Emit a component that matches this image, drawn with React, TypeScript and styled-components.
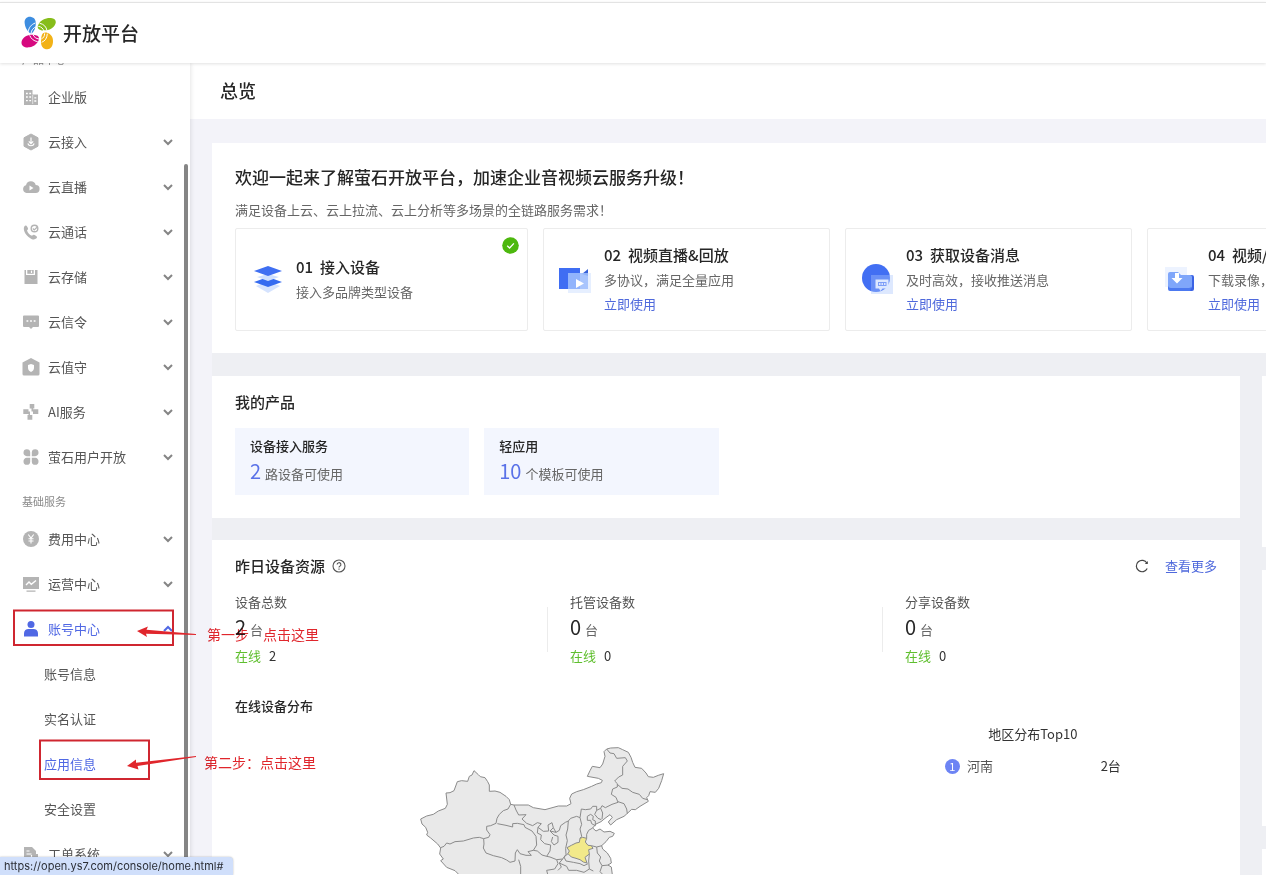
import React from "react";
import styled, { createGlobalStyle } from "styled-components";

const GlobalStyle = createGlobalStyle`
  *, *::before, *::after { box-sizing: border-box; }
  body {
    margin: 0;
    background: #fff;
    color: #555;
    font-family: "Noto Sans CJK SC", "Noto Sans", sans-serif;
    font-size: 13px;
    line-height: 20px;
  }
  button { border: 0; background: none; padding: 0; font: inherit; color: inherit; cursor: pointer; }
  a { color: #4f69dc; text-decoration: none; }
  h1, h2, h3, p, ul, ol, dl, dd { margin: 0; padding: 0; font-weight: inherit; font-size: inherit; }
  ul, ol { list-style: none; }
  svg { display: block; flex: none; }
`;

/* ---------- shell ---------- */

const Page = styled.div`
  position: relative;
  display: flex;
  flex-direction: column;
  height: 100vh;
  overflow: hidden;
  padding-top: 2px;
`;

const Header = styled.header`
  position: relative;
  z-index: 2;
  flex: none;
  display: flex;
  align-items: center;
  gap: 7px;
  height: 61px;
  padding-left: 21px;
  background: #fff;
  border-top: 1px solid #e3e3e3;
  box-shadow: 0 1px 3px rgba(0, 0, 0, 0.12);
`;

const Brand = styled.span`
  font-size: 19px;
  line-height: 28px;
  font-weight: 500;
  color: #262626;
`;

const Body = styled.div`
  flex: 1;
  min-height: 0;
  display: flex;
`;

/* ---------- sidebar ---------- */

const Sidebar = styled.nav`
  position: relative;
  z-index: 1;
  flex: 0 0 190px;
  overflow: hidden;
  background: #fff;
  box-shadow: 1px 0 4px rgba(0, 0, 0, 0.1);
`;

const NavScroll = styled.div`
  margin-top: -26px;
`;

const ScrollThumb = styled.div`
  position: absolute;
  top: 101px;
  right: 2px;
  bottom: 0;
  width: 4px;
  border-radius: 2px 2px 0 0;
  background: #858585;
`;

const NavLabel = styled.h2`
  height: 37px;
  padding: 12px 22px 0;
  font-size: 11px;
  line-height: 20px;
  color: #8a8a8a;
`;

const NavRow = styled.button<{ $active?: boolean }>`
  display: flex;
  align-items: center;
  gap: 8px;
  width: 100%;
  height: 45px;
  padding: 0 16px 0 22px;
  text-align: left;
  color: ${(p) => (p.$active ? "#5068e4" : "#555")};
`;

const NavText = styled.span`
  flex: 1;
`;

const SubRow = styled.a<{ $active?: boolean }>`
  display: flex;
  align-items: center;
  height: 45px;
  padding-left: 44px;
  color: ${(p) => (p.$active ? "#5068e4" : "#555")};
`;

/* ---------- main ---------- */

const Main = styled.main`
  flex: 1;
  min-width: 0;
  overflow: hidden;
  background: #f3f3f9;
`;

const TitleBar = styled.div`
  padding: 13px 30px 15px;
  background: #fff;
`;

const PageTitle = styled.h1`
  font-size: 18px;
  line-height: 28px;
  font-weight: 500;
  color: #262626;
`;

const Content = styled.div`
  display: flex;
  flex-direction: column;
  gap: 23px;
  margin: 24px 0 0 22px;
  background: #eeeff3;
`;

const Welcome = styled.section`
  padding: 21px 0 22px 23px;
  overflow: hidden;
  background: #fff;
`;

const WelcomeTitle = styled.h2`
  font-size: 17px;
  line-height: 26px;
  font-weight: 500;
  color: #262626;
  white-space: nowrap;
`;

const WelcomeText = styled.p`
  margin: 10px 0 8px;
  color: #666;
`;

const Steps = styled.ol`
  display: flex;
  gap: 15px;
`;

const Step = styled.li<{ $wide?: boolean }>`
  position: relative;
  flex: 0 0 ${(p) => (p.$wide ? 293 : 287)}px;
  display: flex;
  align-items: center;
  gap: 13px;
  height: 103px;
  padding: 0 15px 2px;
  border: 1px solid #ececec;
  border-radius: 2px;
  white-space: nowrap;
`;

const StepTitle = styled.h3`
  display: flex;
  gap: 7px;
  font-size: 15px;
  line-height: 26px;
  font-weight: 500;
  color: #262626;
`;

const StepLine = styled.p`
  line-height: 24px;
  color: #666;
`;

const DoneBadge = styled.span`
  position: absolute;
  top: 8px;
  right: 8px;
`;

const Columns = styled.div`
  display: flex;
  gap: 22px;
`;

const LeftColumn = styled.div`
  flex: 0 0 calc(100% - 26px);
  display: flex;
  flex-direction: column;
  gap: 22px;
`;

const RightColumn = styled.aside`
  flex: 0 0 300px;
  display: flex;
  flex-direction: column;
  gap: 23px;
`;

const SidePanel = styled.div<{ $height: number }>`
  height: ${(p) => p.$height}px;
  background: #fff;
`;

const Card = styled.section`
  padding: 14px 23px 23px;
  background: #fff;
`;

const CardHead = styled.div`
  display: flex;
  align-items: center;
  gap: 7px;
`;

const CardTitle = styled.h2`
  font-size: 15px;
  line-height: 24px;
  font-weight: 500;
  color: #262626;
`;

const CardTools = styled.div`
  display: flex;
  align-items: center;
  gap: 16px;
  margin-left: auto;
`;

const Products = styled.div`
  display: grid;
  grid-template-columns: repeat(4, 1fr);
  gap: 15px;
  margin-top: 14px;
`;

const Product = styled.div`
  padding: 8px 15px 7px;
  background: #f3f6fe;
`;

const ProductName = styled.h3`
  font-weight: 500;
  color: #262626;
`;

const Amount = styled.p`
  display: flex;
  align-items: baseline;
  gap: 4px;
  height: 28px;
  margin-top: 4px;
  line-height: 28px;
  color: #666;
`;

const Figure = styled.span<{ $accent?: boolean }>`
  font-size: 20px;
  line-height: 20px;
  color: ${(p) => (p.$accent ? "#5a72e8" : "#262626")};
`;

const Stats = styled.div`
  display: grid;
  grid-template-columns: repeat(3, 1fr);
  margin: 14px -23px 0 0;
`;

const Stat = styled.div`
  display: flex;
  justify-content: space-between;
  align-items: center;

  &:not(:last-child)::after {
    content: "";
    width: 1px;
    height: 45px;
    margin-right: 22px;
    background: #ececec;
  }
`;

const Online = styled.p`
  display: flex;
  gap: 8px;
  margin-top: 2px;
  color: #333;
`;

const OnlineTag = styled.span`
  color: #5fbf2e;
`;

const SubTitle = styled.h3`
  margin-top: 30px;
  font-weight: 500;
  color: #262626;
`;

const Distribution = styled.div`
  display: grid;
  grid-template-columns: 5fr 3fr;
  justify-items: center;
`;

const MapPane = styled.div`
  padding-top: 13px;
`;

const Ranking = styled.div`
  width: 176px;
  padding-top: 8px;
`;

const RankTitle = styled.h3`
  text-align: center;
  color: #333;
`;

const RankRow = styled.li`
  display: flex;
  align-items: center;
  gap: 7px;
  margin-top: 12px;
  color: #333;
`;

const RankBadge = styled.span`
  width: 15px;
  height: 15px;
  border-radius: 50%;
  background: #6d84f4;
  color: #fff;
  font-size: 11px;
  line-height: 15px;
  text-align: center;
`;

const RankName = styled.span`
  flex: 1;
  color: #555;
`;

/* ---------- overlays ---------- */

const StatusBar = styled.div`
  position: fixed;
  left: 0;
  bottom: 0;
  z-index: 4;
  padding: 0 10px 0 4px;
  border-radius: 0 4px 0 0;
  background: #d0dffb;
  box-shadow: 0 0 2px rgba(0, 0, 0, 0.3);
  color: #2c2f36;
  font-family: Inter, sans-serif;
  font-size: 11px;
  line-height: 18px;
`;

const Marks = styled.svg`
  position: absolute;
  top: 0;
  left: 0;
  z-index: 3;
  pointer-events: none;
`;

const Note = styled.span<{ $left: number; $top: number }>`
  position: absolute;
  left: ${(p) => p.$left}px;
  top: ${(p) => p.$top}px;
  z-index: 3;
  font-size: 14px;
  line-height: 20px;
  color: #e0262c;
  mix-blend-mode: multiply;
  white-space: pre;
  pointer-events: none;
`;

/* ---------- drawings ---------- */

const Logo = () => (
  <svg width="35" height="34" viewBox="0 0 105 102" aria-hidden="true">
    <path d="M11 22C9 8 20 0 31 3c11 2 15 13 13 25-1 10-4 17-10 23-3 2-8 1-11-3C16 41 12 32 11 22z" fill="#3d8de0" />
    <path d="M52 26C58 12 74 5 90 6c12 1 17 9 13 18-5 12-18 19-32 19-8 1-15-1-19-5-3-4-2-8 0-12z" fill="#86bd1a" />
    <path d="M2 76c3-13 18-21 34-20 13 1 19 5 18 12-2 12-14 24-29 26C10 96-1 89 2 76z" fill="#d6097f" />
    <path d="M66 52c4-3 9-3 14-1 12 4 17 15 16 27-1 13-7 21-17 22-12 0-19-9-19-22 0-10 1-21 6-26z" fill="#f2b217" />
    <g fill="none" stroke="#fff" strokeWidth="3">
      <path d="M22 47c1-12 9-22 21-26M30 52c1-9 7-17 16-20" />
      <path d="M56 22c12 2 20 10 22 22M52 31c9 1 15 7 17 15" />
      <path d="M26 58c4 10 12 17 24 19M36 56c3 7 9 12 18 13" />
      <path d="M62 79c10-4 16-12 17-26M61 69c6-3 10-8 10-17" />
    </g>
  </svg>
);

const Chevron = ({ up }: { up?: boolean }) => (
  <svg width="12" height="12" viewBox="0 0 12 12" fill="none" stroke={up ? "#5068e4" : "#858585"} strokeWidth="2" aria-hidden="true">
    <path d={up ? "M2 8l4-4 4 4" : "M2 4l4 4 4-4"} />
  </svg>
);

const icons: Record<string, React.ReactNode> = {
  building: (
    <>
      <path d="M2 2h8.500v4.500H16V17H2z" />
      <path d="M4 5.500h1.800M7.300 5.500h1.800M4 9h1.800M7.300 9h1.800M4 12.700h1.800M7.300 12.700h1.800M12.300 9.800h2M12.300 13h2" stroke="#fff" strokeWidth="1.300" />
      <path d="M10.700 7v9" stroke="#fff" strokeWidth=".6" />
    </>
  ),
  access: (
    <>
      <path d="M9 1l7 3.800v8.400L9 17l-7-3.800V4.800z" strokeLinejoin="round" stroke="#b4b4b4" />
      <path d="M9 4.500v6M6.800 8.400L9 10.600l2.200-2.200M5.800 10.500a3.400 3.400 0 0 0 6.400 0" fill="none" stroke="#fff" strokeWidth="1.200" />
    </>
  ),
  live: (
    <>
      <path d="M4.500 15A4 4 0 0 1 4 7.200 5 5 0 0 1 13.700 7 4 4 0 0 1 13.500 15z" />
      <path d="M7.500 7.500v5l4-2.500z" fill="#fff" />
    </>
  ),
  call: (
    <>
      <path d="M2.300 3.500C3.500 2 4.500 2.400 5.500 4.200c.9 1.500.6 2.100-.5 3.300.8 2.400 2.600 4.300 5 5.300 1.200-1 2-1.300 3.400-.4 1.800 1 2.200 2 .8 3.200-1.700 1.500-4.500 1-7.700-1.700C3 11 .8 6.500 2.300 3.500z" />
      <circle cx="12.500" cy="5.500" r="3.300" fill="none" stroke="#b4b4b4" strokeWidth="1.400" />
      <path d="M10.800 5.500l1.400 1.400 3.400-3.200" fill="none" stroke="#b4b4b4" strokeWidth="1.300" />
    </>
  ),
  disk: (
    <>
      <path d="M2.500 2h1.500v5h9V2h2.500v14h-13z" />
      <path d="M5.300 2h6.400v3.800H5.300z" />
      <path d="M9.500 2.600v2.400" stroke="#fff" strokeWidth="1.200" />
    </>
  ),
  message: (
    <>
      <path d="M2 2.500h14a1 1 0 0 1 1 1v9.500a1 1 0 0 1-1 1h-5L9 16l-2-2H2a1 1 0 0 1-1-1V3.500a1 1 0 0 1 1-1z" />
      <path d="M4.500 8h1.800M8.100 8h1.800M11.700 8h1.800" stroke="#fff" strokeWidth="1.600" />
    </>
  ),
  guard: (
    <>
      <path d="M9 0l8.500 4.500V16a1.500 1.500 0 0 1-1.500 1.500H2A1.500 1.500 0 0 1 .5 16V4.500z" />
      <path d="M9 6l3 1v3c0 2-1.300 3.200-3 4-1.700-.8-3-2-3-4V7z" fill="#fff" />
    </>
  ),
  ai: <path d="M7.700 1h4.600v4.600H7.700zM1.300 6.300h5.200v4.600H1.300zM11 6.300h5.300v4.600H11zM5.500 12h4.800v4.800H5.500zM6.500 8.500h1.500v3.500H6.500zM9.500 5.600h1.500v3H9.500z" />,
  clover: (
    <path d="M1.500 4.500a3.300 3.300 0 1 1 6.700 0v3.700H4.800A3.300 3.300 0 0 1 1.500 4.500zM16.500 4.500a3.300 3.300 0 1 0-6.700 0v3.700h3.400a3.300 3.300 0 0 0 3.300-3.700zM1.500 13.500a3.300 3.300 0 1 0 6.700 0V9.800H4.800a3.300 3.300 0 0 0-3.300 3.700zM16.500 13.500a3.300 3.300 0 1 1-6.700 0V9.800h3.400a3.300 3.300 0 0 1 3.300 3.700z" />
  ),
  fee: (
    <>
      <circle cx="9" cy="9" r="8" />
      <path d="M6.300 4.500L9 8l2.700-3.500M9 8v5.500M6.500 8.700h5M6.500 11h5" fill="none" stroke="#fff" strokeWidth="1.100" />
    </>
  ),
  operate: (
    <>
      <path d="M1 2h16v12H1zM4.500 15.500h9v1.300h-9z" />
      <path d="M4 10l3-3 2.300 2.300L14 5.500" fill="none" stroke="#fff" strokeWidth="1.400" />
    </>
  ),
  user: (
    <>
      <circle cx="9" cy="4.500" r="3.500" />
      <path d="M2 16.500v-3.200C2 10.500 4.200 9 6.500 9h5c2.300 0 4.500 1.500 4.500 4.300v3.200z" />
    </>
  ),
  order: (
    <>
      <path d="M2 2h8l4 4v3h2v8H2z" />
      <path d="M4.500 6h3M4.500 9h5M9.500 10v6M11.500 12.500h3" stroke="#fff" strokeWidth="1.200" />
    </>
  ),
};

const NavIcon = ({ name, active }: { name: string; active?: boolean }) => (
  <svg width="18" height="18" viewBox="0 0 18 18" fill={active ? "#5068e4" : "#b4b4b4"} aria-hidden="true">
    {icons[name]}
  </svg>
);

const LayersIcon = () => (
  <svg width="32" height="32" viewBox="0 0 32 32" aria-hidden="true">
    <path d="M5 23l12-5 12 5-12 7z" fill="#c3d7fd" opacity=".7" />
    <path d="M3 19l14-5 14 5-14 5z" fill="#356bf0" />
    <path d="M6 14l11-3 11 3-11 4z" fill="#cfe0fe" />
    <path d="M3 8l14-5 14 5-14 5z" fill="#3f6ff2" />
  </svg>
);

const VideoIcon = () => (
  <svg width="32" height="32" viewBox="0 0 32 32" aria-hidden="true">
    <path d="M0 5h21v21H0z" fill="#3f6df3" />
    <path d="M23 11l6-5v7z" fill="#3560d8" />
    <path d="M9 10h23v20H9z" fill="#d5e4ff" opacity=".6" />
    <path d="M9 10h20v16H9z" fill="#8fb4fc" opacity=".7" />
    <path d="M17 16v9l8-4.500z" fill="#fff" />
  </svg>
);

const MessageIcon = () => (
  <svg width="32" height="32" viewBox="0 0 32 32" aria-hidden="true">
    <circle cx="15" cy="15" r="14" fill="#426ff3" />
    <path d="M10 12h22v19H10z" fill="#a9c6fd" opacity=".4" />
    <path d="M14.500 16.500h13v9h-6l-2 2.500-1.500-2.500h-3.500z" fill="#dce8ff" />
    <path d="M17 19h8.500v4H17z" fill="#7d9ff8" />
    <path d="M18 21h1.500M20.500 21h1.500M23 21h1.500" stroke="#fff" strokeWidth="1.300" />
  </svg>
);

const DownloadIcon = () => (
  <svg width="32" height="32" viewBox="0 0 32 32" aria-hidden="true">
    <path d="M2 4h22v20H2z" fill="#edf3ff" />
    <path d="M8 12h21a2 2 0 0 1 2 2v12a2 2 0 0 1-2 2H8z" fill="#3b63e4" />
    <path d="M7 9h8l3 3h9a2 2 0 0 1 2 2v9a3 3 0 0 1-3 3H7a2 2 0 0 1-2-2V11a2 2 0 0 1 2-2z" fill="#7fa6fa" />
    <path d="M5 23v3a2 2 0 0 0 2 2h20l2-4-3 1H8a3 3 0 0 1-3-2z" fill="#4c79f0" />
    <path d="M12 10h4v5h3.500L14 20.500 8.500 15H12z" fill="#fff" />
  </svg>
);

const DoneIcon = () => (
  <svg width="17" height="17" viewBox="0 0 17 17" aria-label="已完成" role="img">
    <circle cx="8.500" cy="8.500" r="8.300" fill="#4db80e" />
    <path d="M5.200 8.700l2.400 2.300 4.300-4.600" fill="none" stroke="#fff" strokeWidth="1.300" />
  </svg>
);

const HelpIcon = () => (
  <svg width="14" height="14" viewBox="0 0 14 14" fill="none" stroke="#555" strokeWidth="1.100" aria-hidden="true">
    <circle cx="7" cy="7" r="6" />
    <path d="M5.100 5.600a1.900 1.900 0 1 1 2.700 1.700c-.6.3-.8.6-.8 1.200M7 9.500v1.200" />
  </svg>
);

const RefreshIcon = () => (
  <svg width="14" height="14" viewBox="0 0 14 14" fill="none" stroke="#444" strokeWidth="1.200" aria-hidden="true">
    <path d="M12.200 9.500A5.700 5.700 0 1 1 12 4.200" />
    <path d="M12.800 2v3h-3z" fill="#444" stroke="none" />
  </svg>
);

const ChinaMap = () => (
  <svg width="284" height="145" viewBox="0 0 852 435" role="img" aria-label="在线设备分布地图">
    <g stroke="#8b8b8b" strokeWidth="3" strokeLinejoin="round" fill="#e9e9e9">
      <path d="M62 270L80 261 100 256 115 246 136 238 142 226 138 192 150 191 162 185 172 158 185 155 203 157 208 142 216 138 222 125 235 137 241 143 255 146 263 158 268 168 268 187 285 186 300 190 318 202 328 212 332 226 342 228 385 228 400 236 435 242 475 231 500 231 513 224 509 208 515 195 530 188 550 182 575 172 590 165 604 161 607 154 595 148 562 142 570 125 577 112 600 116 608 105 615 82 612 68 620 60 632 57 655 56 668 62 685 70 693 85 698 100 705 115 725 118 738 132 745 143 760 145 775 139 791 134 785 155 776 178 766 190 750 188 746 200 740 206 745 217 720 232 706 242 695 241 680 255 672 262 650 272 632 288 625 279 637 265 630 257 615 268 603 278 588 285 578 297 588 306 600 300 612 309 630 307 643 313 638 322 628 325 618 338 605 350 608 360 622 372 632 388 634 402 624 408 634 414 638 445 185 445 165 425 140 415 122 395 130 390 119 375 122 357 113 345 92 327 80 318 83 310 77 295 66 285z" />
      <path d="M501 356L514 349 528 342 538 340 540 328 548 325 560 328 556 339 564 349 574 350 579 358 566 362 568 375 555 385 561 402 550 399 540 392 528 388 514 384 504 374 508 366z" fill="#f2e98a" />
      <g fill="none">
        <path d="M122 356L132 352 140 342 150 345 165 338 190 336 220 327 238 325 251 329 266 325 270 317 260 303 260 292 272 290 288 283 291 268 298 256 310 245 324 240 332 226" />
        <path d="M251 329L252 345 250 357 258 372 280 380 305 386 320 393 330 400 345 396 346 372 352 362 360 374 378 379 394 379 384 368 400 364 410 348 408 322 396 306 375 295 372 287 352 283 338 284 338 294 318 289 292 284" />
        <path d="M342 228L348 243 356 258 378 257 366 270 380 283 398 290 412 281 424 284 414 295 430 307 446 306 444 288 456 281 460 296 450 306 468 310 478 304" />
        <path d="M478 304L482 290 496 280 505 276 512 268 530 262 540 266 544 240 556 242 572 240 578 232 590 232 590 244 602 238 606 230 616 236 636 226 654 220 648 205 634 196 638 180 652 174 652 164 644 156 656 144 668 138 668 112 682 96 676 86 650 88 642 74 630 72 620 60" />
        <path d="M652 166L666 178 684 180 698 190 718 196 728 208 742 212M654 218L672 224 680 240 682 254M602 238L608 252 606 270" />
        <path d="M505 276L503 300 498 318 502 335 497 358M540 266L545 286 540 300 545 322 540 328" />
        <path d="M562 262L572 256 580 262 578 272 586 276 586 290 575 284 572 274 562 274zM590 244L584 256 594 268 604 272M578 297L566 304 560 316 560 328M574 350L590 354 606 350M590 354L592 372 602 384 598 396 606 410 626 408M568 375L566 396 568 420 580 426M606 410L600 428 608 436" />
        <path d="M414 295L412 312 424 318 422 332 434 344 452 348 450 366 440 382 426 378 412 366 400 364M450 306L462 318 474 322 474 340 462 348 454 338 458 324M460 296L468 310" />
        <path d="M497 358L498 376 488 390 470 392 450 384 440 382M356 392L362 412 362 440M470 392L474 404 464 420 440 424 444 440M488 390L478 402 484 414 474 424M504 374L492 384 498 396 520 400 540 404 552 410 564 404M478 402L500 412 506 424 530 424 552 430 568 420" />
      </g>
    </g>
  </svg>
);

/* ---------- data ---------- */

const products = [
  { icon: "building", text: "企业版", leaf: true },
  { icon: "access", text: "云接入" },
  { icon: "live", text: "云直播" },
  { icon: "call", text: "云通话" },
  { icon: "disk", text: "云存储" },
  { icon: "message", text: "云信令" },
  { icon: "guard", text: "云值守" },
  { icon: "ai", text: "AI服务" },
  { icon: "clover", text: "萤石用户开放" },
];

const accountLinks = ["账号信息", "实名认证", "应用信息", "安全设置"];

const steps = [
  { no: "01", title: "接入设备", text: "接入多品牌类型设备", icon: <LayersIcon />, done: true },
  { no: "02", title: "视频直播&回放", text: "多协议，满足全量应用", icon: <VideoIcon /> },
  { no: "03", title: "获取设备消息", text: "及时高效，接收推送消息", icon: <MessageIcon /> },
  { no: "04", title: "视频/图片下载", text: "下载录像，保存至本地", icon: <DownloadIcon /> },
];

const stats = [
  { label: "设备总数", total: 2, online: 2 },
  { label: "托管设备数", total: 0, online: 0 },
  { label: "分享设备数", total: 0, online: 0 },
];

const NavItem = ({ icon, text, leaf, active }: { icon: string; text: string; leaf?: boolean; active?: boolean }) => (
  <NavRow type="button" $active={active} aria-expanded={leaf ? undefined : !!active}>
    <NavIcon name={icon} active={active} />
    <NavText>{text}</NavText>
    {!leaf && <Chevron up={active} />}
  </NavRow>
);

export default function App() {
  return (
    <>
      <GlobalStyle />
      <Page>
        <Header>
          <Logo />
          <Brand>开放平台</Brand>
        </Header>
        <Body>
          <Sidebar>
            <NavScroll>
              <NavLabel>产品中心</NavLabel>
              {products.map((item) => (
                <NavItem key={item.text} {...item} />
              ))}
              <NavLabel>基础服务</NavLabel>
              <NavItem icon="fee" text="费用中心" />
              <NavItem icon="operate" text="运营中心" />
              <NavItem icon="user" text="账号中心" active />
              {accountLinks.map((text) => (
                <SubRow key={text} href="#" $active={text === "应用信息"}>
                  {text}
                </SubRow>
              ))}
              <NavItem icon="order" text="工单系统" />
            </NavScroll>
            <ScrollThumb />
          </Sidebar>
          <Main>
            <TitleBar>
              <PageTitle>总览</PageTitle>
            </TitleBar>
            <Content>
              <Welcome>
                <WelcomeTitle>欢迎一起来了解萤石开放平台，加速企业音视频云服务升级！</WelcomeTitle>
                <WelcomeText>满足设备上云、云上拉流、云上分析等多场景的全链路服务需求！</WelcomeText>
                <Steps>
                  {steps.map((s) => (
                    <Step key={s.no} $wide={s.done}>
                      {s.icon}
                      <div>
                        <StepTitle>
                          <span>{s.no}</span>
                          <span>{s.title}</span>
                        </StepTitle>
                        <StepLine>{s.text}</StepLine>
                        {!s.done && (
                          <StepLine>
                            <a href="#">立即使用</a>
                          </StepLine>
                        )}
                      </div>
                      {s.done && (
                        <DoneBadge>
                          <DoneIcon />
                        </DoneBadge>
                      )}
                    </Step>
                  ))}
                </Steps>
              </Welcome>
              <Columns>
                <LeftColumn>
                  <Card>
                    <CardTitle>我的产品</CardTitle>
                    <Products>
                      <Product>
                        <ProductName>设备接入服务</ProductName>
                        <Amount>
                          <Figure $accent>2</Figure>路设备可使用
                        </Amount>
                      </Product>
                      <Product>
                        <ProductName>轻应用</ProductName>
                        <Amount>
                          <Figure $accent>10</Figure>个模板可使用
                        </Amount>
                      </Product>
                    </Products>
                  </Card>
                  <Card>
                    <CardHead>
                      <CardTitle>昨日设备资源</CardTitle>
                      <button type="button" aria-label="说明">
                        <HelpIcon />
                      </button>
                      <CardTools>
                        <button type="button" aria-label="刷新">
                          <RefreshIcon />
                        </button>
                        <a href="#">查看更多</a>
                      </CardTools>
                    </CardHead>
                    <Stats>
                      {stats.map((s) => (
                        <Stat key={s.label}>
                          <div>
                            <p>{s.label}</p>
                            <Amount>
                              <Figure>{s.total}</Figure>台
                            </Amount>
                            <Online>
                              <OnlineTag>在线</OnlineTag>
                              {s.online}
                            </Online>
                          </div>
                        </Stat>
                      ))}
                    </Stats>
                    <SubTitle>在线设备分布</SubTitle>
                    <Distribution>
                      <MapPane>
                        <ChinaMap />
                      </MapPane>
                      <Ranking>
                        <RankTitle>地区分布Top10</RankTitle>
                        <ol>
                          <RankRow>
                            <RankBadge>1</RankBadge>
                            <RankName>河南</RankName>
                            <span>2台</span>
                          </RankRow>
                        </ol>
                      </Ranking>
                    </Distribution>
                  </Card>
                </LeftColumn>
                <RightColumn>
                  <SidePanel $height={171} />
                  <SidePanel $height={256} />
                  <SidePanel $height={200} />
                </RightColumn>
              </Columns>
            </Content>
          </Main>
        </Body>

        <Marks width="200" height="800" viewBox="0 0 200 800" fill="none" stroke="#cf2630" strokeWidth="2" aria-hidden="true">
          <rect x="14" y="610.500" width="159" height="34.500" />
          <rect x="40" y="740.500" width="109" height="38.500" />
          <g fill="#e0262c" stroke="none">
            <path d="M137 631l11-4.500-1.500 3.300L196 634v1l-50-1.300 1 3.300z" />
            <path d="M127 766l9-6.500v3.300l60-6.800v1l-58.500 9 1 3.500z" />
          </g>
        </Marks>
        <Note $left={207} $top={624}>{"第一步\u3000点击这里"}</Note>
        <Note $left={204} $top={752}>第二步：点击这里</Note>
        <StatusBar>https://open.ys7.com/console/home.html#</StatusBar>
      </Page>
    </>
  );
}
